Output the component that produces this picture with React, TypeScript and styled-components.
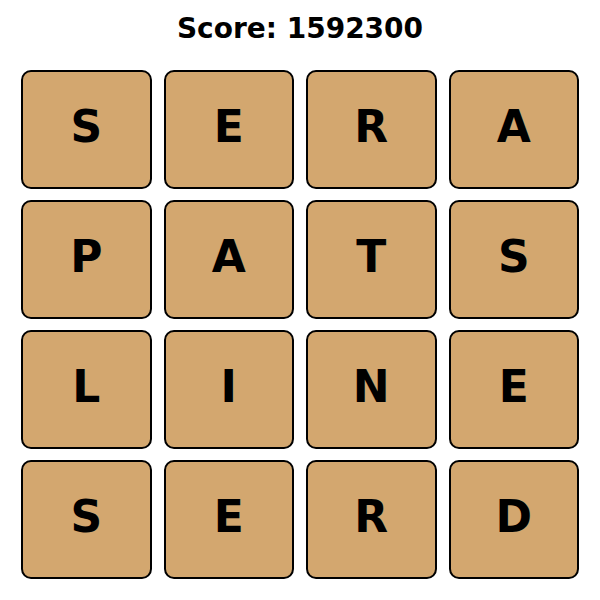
import React from 'react';
import styled, { createGlobalStyle } from 'styled-components';

const GlobalStyle = createGlobalStyle`
  html, body {
    margin: 0;
    padding: 0;
    background: #ffffff;
  }
  body {
    font-family: "DejaVu Sans", sans-serif;
  }
`;

const board = [
  ['S', 'E', 'R', 'A'],
  ['P', 'A', 'T', 'S'],
  ['L', 'I', 'N', 'E'],
  ['S', 'E', 'R', 'D'],
];

const App = () => {
  return (
    <>
      <GlobalStyle />
      <StyledPage>
        <StyledScore>Score: 1592300</StyledScore>
        <StyledGrid>
          {board.flat().map((letter, i) => (
            <StyledTile key={i}>{letter}</StyledTile>
          ))}
        </StyledGrid>
      </StyledPage>
    </>
  );
};

export default App;

const StyledPage = styled.main`
  width: 600px;
  height: 600px;
  box-sizing: border-box;
  padding: 0 21px;
  display: flex;
  flex-direction: column;
`;

const StyledScore = styled.h1`
  margin: 0;
  height: 56px;
  display: flex;
  align-items: center;
  justify-content: center;
  font-size: 28px;
  font-weight: 700;
  color: #000;
`;

const StyledGrid = styled.div`
  margin-top: 14px;
  display: grid;
  grid-template-columns: repeat(4, 1fr);
  grid-auto-rows: 119px;
  column-gap: 12px;
  row-gap: 11px;
`;

const StyledTile = styled.div`
  box-sizing: border-box;
  padding-bottom: 6px;
  background: #d3a76f;
  border: 2px solid #000;
  border-radius: 10px;
  display: flex;
  align-items: center;
  justify-content: center;
  font-size: 44px;
  font-weight: 700;
  color: #000;
`;
